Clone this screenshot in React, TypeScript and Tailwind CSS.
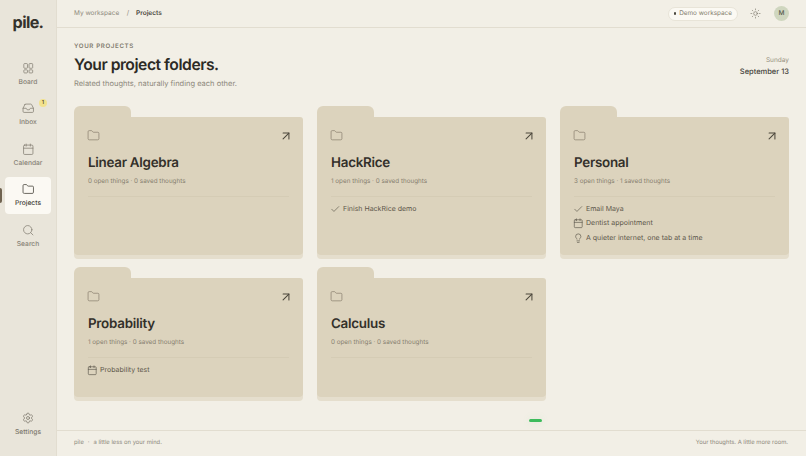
import {
  ArrowUpRight,
  Calendar,
  Check,
  Folder,
  Inbox,
  Lightbulb,
  Search,
  Settings,
  Sun,
} from "lucide-react";
import type { LucideIcon } from "lucide-react";

interface FolderItem {
  icon: LucideIcon;
  label: string;
}

interface ProjectFolder {
  name: string;
  stats: string;
  items: FolderItem[];
}

function BoardIcon({ className, strokeWidth = 1.5 }: { className?: string; strokeWidth?: number }) {
  return (
    <svg viewBox="0 0 24 24" fill="none" stroke="currentColor" strokeWidth={strokeWidth} className={className}>
      <rect x="3.5" y="3" width="7" height="9" rx="1.5" />
      <rect x="13.5" y="3" width="7" height="9" rx="1.5" />
      <rect x="3.5" y="15" width="7" height="6" rx="1.5" />
      <rect x="13.5" y="15" width="7" height="6" rx="1.5" />
    </svg>
  );
}

const navItems: { icon: LucideIcon | typeof BoardIcon; label: string; badge?: string; active?: boolean }[] = [
  { icon: BoardIcon, label: "Board" },
  { icon: Inbox, label: "Inbox", badge: "1" },
  { icon: Calendar, label: "Calendar" },
  { icon: Folder, label: "Projects", active: true },
  { icon: Search, label: "Search" },
];

const folders: ProjectFolder[] = [
  { name: "Linear Algebra", stats: "0 open things · 0 saved thoughts", items: [] },
  {
    name: "HackRice",
    stats: "1 open things · 0 saved thoughts",
    items: [{ icon: Check, label: "Finish HackRice demo" }],
  },
  {
    name: "Personal",
    stats: "3 open things · 1 saved thoughts",
    items: [
      { icon: Check, label: "Email Maya" },
      { icon: Calendar, label: "Dentist appointment" },
      { icon: Lightbulb, label: "A quieter internet, one tab at a time" },
    ],
  },
  {
    name: "Probability",
    stats: "1 open things · 0 saved thoughts",
    items: [{ icon: Calendar, label: "Probability test" }],
  },
  { name: "Calculus", stats: "0 open things · 0 saved thoughts", items: [] },
];

function NavButton({ icon: Icon, label, badge, active }: (typeof navItems)[number]) {
  return (
    <div className="relative h-[37px] w-[46px]">
      {active && <div className="absolute left-[-5px] top-[11px] h-[15px] w-[2px] rounded-r bg-[#6f6350]" />}
      <div
        className={`flex h-full w-full flex-col items-center justify-center gap-[2.5px] rounded-[4px] pt-[1px] ${
          active ? "bg-[#fbf9f3] text-[#45423a]" : "text-[#878276]"
        }`}
      >
        <Icon className="h-[12.5px] w-[12.5px]" strokeWidth={1.5} />
        <span className="text-[6.7px] font-medium leading-[10px]">{label}</span>
      </div>
      {badge && (
        <span className="absolute right-[4px] top-[3.5px] flex h-[8px] w-[8px] items-center justify-center rounded-full bg-[#f2e28f] text-[5.5px] font-semibold text-[#5b5234]">
          {badge}
        </span>
      )}
    </div>
  );
}

function FolderCard({ name, stats, items }: ProjectFolder) {
  return (
    <div className="flex flex-col">
      <div className="h-[11px] w-[57px] rounded-t-[6px] bg-[#dcd3bd]" />
      <div className="min-h-[119px] flex-1 rounded-b-[4px] rounded-tr-[3px] bg-[#dcd3bd] pb-[10px] pl-[14px] pr-[14px] pt-[12px] shadow-[0_4px_0_#e5decd]">
        <div className="flex h-[13px] items-center justify-between">
          <Folder className="ml-[-1px] h-[13px] w-[13px] text-[#84796a]" strokeWidth={1.25} />
          <ArrowUpRight className="mr-[-4px] h-[14px] w-[14px] text-[#4b463b]" strokeWidth={1.75} />
        </div>
        <h2 className="mt-[10px] text-[13.4px] font-semibold leading-[22px] tracking-[-0.02em] text-[#33302a]">
          {name}
        </h2>
        <p className="mt-[2px] text-[6.3px] leading-[10px] text-[#878070]">{stats}</p>
        <div className="mt-[10px] border-t border-[#d5ccb5] pt-[5px]">
          {items.map(({ icon: Icon, label }) => (
            <div key={label} className="flex h-[14.4px] items-center gap-[2.5px] text-[7px] text-[#5c574b]">
              <Icon className="ml-[-1px] h-[10.5px] w-[10.5px] shrink-0" strokeWidth={1.5} />
              <span>{label}</span>
            </div>
          ))}
        </div>
      </div>
    </div>
  );
}

export default function App() {
  return (
    <div className="flex h-[456px] w-[806px] overflow-hidden bg-[#f2efe6] font-['Inter',sans-serif] [text-rendering:geometricPrecision]">
      {/* Sidebar */}
      <aside className="flex w-[57px] shrink-0 flex-col items-center border-r border-[#e2ddd0] bg-[#e9e5da] pb-[19px] pt-[11px]">
        <div className="text-[16.2px] font-bold leading-[22px] tracking-[-0.04em] text-[#34322c]">pile.</div>
        <nav className="mt-[22px] flex flex-col items-center gap-[3.6px]">
          {navItems.map((item) => (
            <NavButton key={item.label} {...item} />
          ))}
        </nav>
        <div className="mt-auto flex flex-col items-center gap-[3px] text-[#7d786c]">
          <Settings className="h-[12px] w-[12px]" strokeWidth={1.5} />
          <span className="text-[6.7px] font-medium leading-[10px]">Settings</span>
        </div>
      </aside>

      <div className="relative flex min-w-0 flex-1 flex-col">
        {/* Top bar */}
        <header className="flex h-[28px] shrink-0 items-center justify-between border-b border-[#e2ddd0] pl-[17px] pr-[17px]">
          <div className="flex items-center text-[6.5px]">
            <span className="text-[#8d887b]">My workspace</span>
            <span className="ml-[7.5px] text-[#8d887b]">/</span>
            <span className="ml-[7px] font-semibold text-[#4b483f]">Projects</span>
          </div>
          <div className="flex items-center">
            <div className="flex h-[14px] items-center gap-[3px] rounded-full border border-[#e8e4d8] bg-[#fbf9f3] pl-[5px] pr-[5px] text-[6.4px] text-[#85806f]">
              <span className="h-[2.5px] w-[2.5px] rounded-full bg-[#4b483f]" />
              Demo workspace
            </div>
            <Sun className="ml-[12px] h-[11px] w-[11px] text-[#6f6a5e]" strokeWidth={1.25} />
            <div className="ml-[13px] flex h-[15px] w-[15px] items-center justify-center rounded-full bg-[#cfd6bf] text-[6.5px] font-medium text-[#55584a]">
              M
            </div>
          </div>
        </header>

        {/* Content */}
        <main className="min-h-0 flex-1 overflow-hidden pl-[17px] pr-[17px] pt-[15px]">
          <div className="flex items-start justify-between">
            <div>
              <p className="text-[6.2px] font-semibold leading-[8px] tracking-[0.1em] text-[#7f7a6d]">YOUR PROJECTS</p>
              <h1 className="mt-[2px] text-[15.7px] font-semibold leading-[24px] tracking-[-0.03em] text-[#2c2a25]">
                Your project folders.
              </h1>
              <p className="mt-[1px] text-[7.5px] leading-[12px] text-[#8d887b]">
                Related thoughts, naturally finding each other.
              </p>
            </div>
            <div className="pt-[12px] text-right">
              <p className="text-[6.5px] leading-[11px] text-[#97927f]">Sunday</p>
              <p className="text-[7.5px] font-medium leading-[11px] text-[#45423a]">September 13</p>
            </div>
          </div>

          <div className="mt-[16px] grid grid-cols-3 gap-x-[14px] gap-y-[12px]">
            {folders.map((folder) => (
              <FolderCard key={folder.name} {...folder} />
            ))}
          </div>
        </main>

        {/* Footer */}
        <footer className="flex h-[26px] shrink-0 items-center justify-between border-t border-[#e2ddd0] pl-[17px] pr-[18px] text-[5.85px] text-[#8d887b]">
          <div className="flex items-center gap-[4px]">
            <span>pile</span>
            <span>·</span>
            <span>a little less on your mind.</span>
          </div>
          <span>Your thoughts. A little more room.</span>
        </footer>

        {/* Sync indicator */}
        <div className="absolute bottom-[34px] left-[472px] h-[3px] w-[13px] rounded-full bg-[#3dbb5c] shadow-[0_0_8px_rgba(61,187,92,0.15)]" />
      </div>
    </div>
  );
}
